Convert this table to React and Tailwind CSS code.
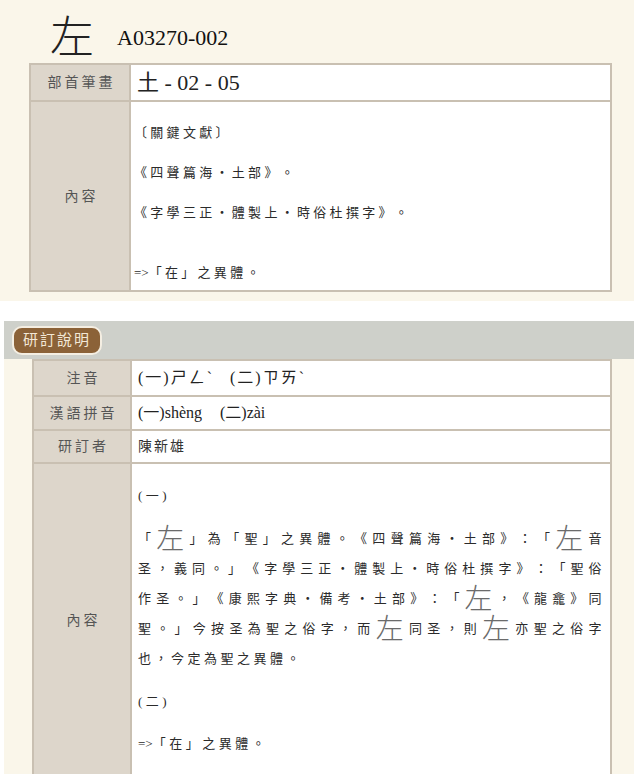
import React from 'react';

const cjk = { fontFamily: '"Liberation Serif", "Noto Sans CJK TC", serif' };

function Big({ children }) {
  return (
    <span className="inline-block align-middle text-[28px] font-light leading-none text-[#6b6b6b]">
      {children}
    </span>
  );
}

function Label({ children }) {
  return (
    <div className="flex items-center justify-center bg-[#ddd6cb] pl-[3px] text-[14px] tracking-[3px] text-[#555]">
      {children}
    </div>
  );
}

export default function App() {
  return (
    <div className="min-h-[774px] w-[634px] bg-white text-[#333] [text-spacing-trim:space-all]" style={cjk}>
      {/* top block */}
      <div className="bg-[#faf6ea] pb-[9px]">
        <div className="flex h-[63px] items-center pl-[50px] pt-[14px]">
          <span className="text-[44px] font-light leading-none text-[#222]">左</span>
          <span className="ml-[23px] mb-[3px] text-[22px] text-[#111]">A03270-002</span>
        </div>

        <div className="ml-[29px] grid w-[583px] grid-cols-[98px_1fr] gap-[2px] bg-[#c9c0b2] p-[2px]">
          <Label>部首筆畫</Label>
          <div className="flex h-[35px] items-center bg-white pl-[6px] text-[22px] text-[#222]">土 - 02 - 05</div>

          <Label>內容</Label>
          <div className="bg-white pb-[7px] pl-[3px] pt-[21px] text-[13px] leading-[20px] tracking-[3.3px] text-[#2b2b2b]">
            <p>〔關鍵文獻〕</p>
            <p className="mt-[20px]">《四聲篇海・土部》。</p>
            <p className="mt-[20px]">《字學三正・體製上・時俗杜撰字》。</p>
            <p className="mt-[40px]"><span className="tracking-normal">=&gt;</span>「在」之異體。</p>
          </div>
        </div>
      </div>

      {/* review block */}
      <div className="mt-[20px] ml-[4px] bg-[#faf6ea]">
        <div className="flex h-[38px] items-center bg-[#ced0ca] pl-[8px]">
          <span className="rounded-[10px] border-2 border-[#f4eee2] bg-[#8b6238] px-[9px] py-[3px] text-[15px] leading-[19px] tracking-[2px] text-[#f3e8d6]">
            研訂說明
          </span>
        </div>

        <div className="ml-[28px] grid w-[580px] grid-cols-[96px_1fr] gap-[2px] bg-[#c9c0b2] p-[2px]">
          <Label>注音</Label>
          <div className="flex h-[34px] items-center bg-white pl-[6px] text-[16px] tracking-[2px] text-[#222]">
            <span>(一)ㄕㄥˋ</span>
            <span className="ml-[16px]">(二)ㄗㄞˋ</span>
          </div>

          <Label>漢語拼音</Label>
          <div className="flex h-[32px] items-center bg-white pl-[6px] text-[16px] text-[#222]">
            <span>(一)shèng</span>
            <span className="ml-[18px]">(二)zài</span>
          </div>

          <Label>研訂者</Label>
          <div className="flex h-[31px] items-center bg-white pl-[6px] text-[14px] tracking-[2px] text-[#333]">陳新雄</div>

          <Label>內容</Label>
          <div className="bg-white pb-[17px] pl-[6px] pr-[5px] pt-[17px] text-[13px] leading-[30px] tracking-[3.5px] text-[#2b2b2b]">
            <p>(一)</p>
            <div className="mt-[13px] text-justify [text-align-last:justify]">
              <p>「<Big>左</Big>」為「聖」之異體。《四聲篇海・土部》：「<Big>左</Big>音</p>
              <p>圣，義同。」《字學三正・體製上・時俗杜撰字》：「聖俗</p>
              <p>作圣。」《康熙字典・備考・土部》：「<Big>左</Big>，《龍龕》同</p>
              <p>聖。」今按圣為聖之俗字，而<Big>左</Big>同圣，則<Big>左</Big>亦聖之俗字</p>
            </div>
            <p>也，今定為聖之異體。</p>
            <p className="mt-[13px]">(二)</p>
            <p className="mt-[12px]"><span className="tracking-normal">=&gt;</span>「在」之異體。</p>
          </div>
        </div>
      </div>
    </div>
  );
}
